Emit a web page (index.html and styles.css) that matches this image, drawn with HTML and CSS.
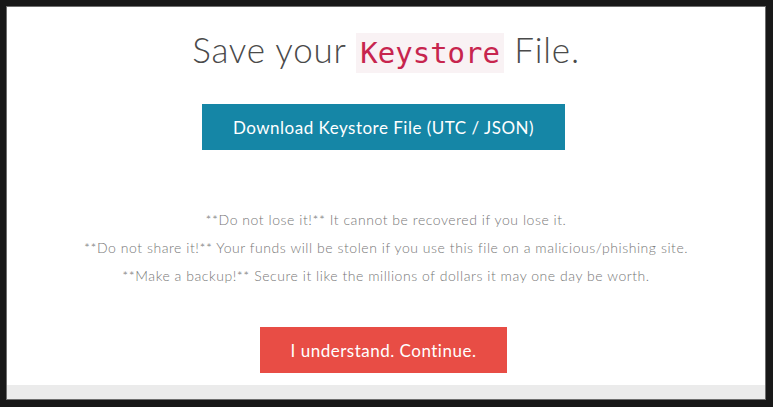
FILE: index.html
```html
<!DOCTYPE html>
<html>
<head>
<meta charset="utf-8">
<link rel="stylesheet" href="styles.css">
</head>
<body>
<div class="frame">
  <main class="panel">
    <h1 class="title">Save your <code class="code">Keystore</code> File.</h1>
    <a class="btn btn-info">Download Keystore File (UTC / JSON)</a>
    <div class="warnings">
      <p>**Do not lose it!** It cannot be recovered if you lose it.</p>
      <p>**Do not share it!** Your funds will be stolen if you use this file on a malicious/phishing site.</p>
      <p>**Make a backup!** Secure it like the millions of dollars it may one day be worth.</p>
    </div>
    <a class="btn btn-danger">I understand. Continue.</a>
  </main>
  <footer class="strip"></footer>
</div>
</body>
</html>
```
FILE: styles.css
```css
html, body {
  margin: 0;
  padding: 0;
  background: #181818;
  height: 100%;
}
body {
  font-family: "Lato", "Liberation Sans", sans-serif;
}
.frame {
  margin: 6px 7px 7px 6px;
  height: 392px;
  border: 1px solid #6e6e6e;
  background: #ffffff;
  display: flex;
  flex-direction: column;
}
.panel {
  flex: 1;
  display: flex;
  flex-direction: column;
  align-items: center;
}
.title {
  margin: 22px 0 0;
  font-size: 35px;
  font-weight: 300;
  line-height: 40px;
  letter-spacing: 0.8px;
  color: #4a4a4a;
}
.code {
  font-family: "DejaVu Sans Mono", monospace;
  font-size: 29px;
  line-height: 1;
  letter-spacing: 0;
  padding: 3px 4px;
  color: #c7254e;
  background: #f9f2f4;
}
.btn {
  display: flex;
  align-items: center;
  justify-content: center;
  height: 46px;
  padding: 0 31px;
  margin-right: 5px;
  font-size: 17px;
  letter-spacing: 0.5px;
  color: #ffffff;
  box-sizing: border-box;
}
.btn-info {
  margin-top: 35px;
  background: #1586a6;
}
.btn-danger {
  margin-top: 37px;
  background: #e84d45;
}
.warnings {
  margin-top: 56px;
  text-align: center;
  font-size: 14px;
  font-weight: 300;
  line-height: 28px;
  letter-spacing: 0.55px;
  color: #777777;
}
.warnings p {
  margin: 0;
}
.strip {
  height: 14px;
  background: #ebebeb;
}
```
